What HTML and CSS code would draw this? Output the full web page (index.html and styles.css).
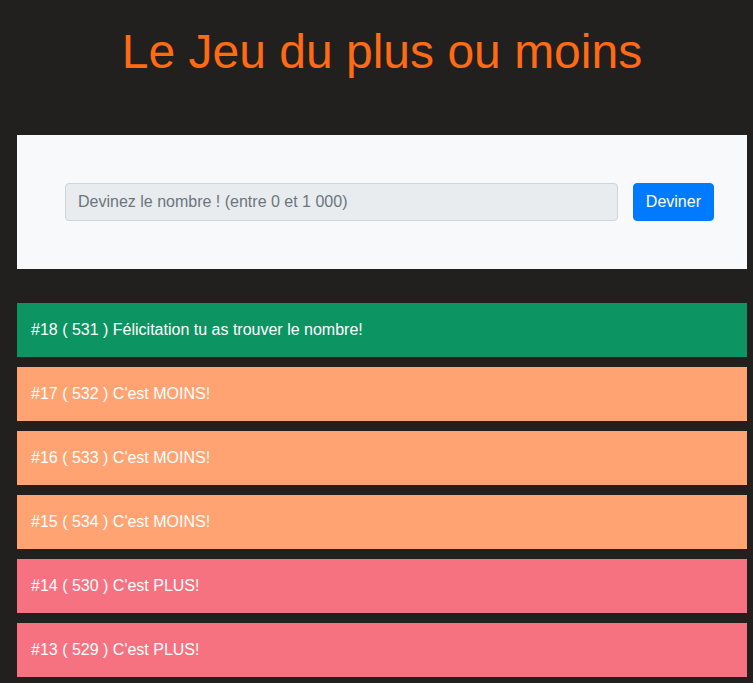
FILE: index.html
```html
<!DOCTYPE html>
<html lang="fr">
<head>
<meta charset="utf-8">
<title>Le Jeu du plus ou moins</title>
<link rel="stylesheet" href="styles.css">
</head>
<body>
<div class="page">
  <h1 class="title">Le Jeu du plus ou moins</h1>
  <form class="guess-box">
    <input class="guess-input" type="text" placeholder="Devinez le nombre ! (entre 0 et 1 000)">
    <button class="guess-btn" type="button">Deviner</button>
  </form>
  <ul class="history">
    <li class="entry win">#18 ( 531 ) Félicitation tu as trouver le nombre!</li>
    <li class="entry less">#17 ( 532 ) C'est MOINS!</li>
    <li class="entry less">#16 ( 533 ) C'est MOINS!</li>
    <li class="entry less">#15 ( 534 ) C'est MOINS!</li>
    <li class="entry more">#14 ( 530 ) C'est PLUS!</li>
    <li class="entry more">#13 ( 529 ) C'est PLUS!</li>
  </ul>
</div>
</body>
</html>
```
FILE: styles.css
```css
* { box-sizing: border-box; }
html, body { margin: 0; padding: 0; }
body {
  background: #22201f;
  font-family: "Liberation Sans", Arial, sans-serif;
  font-size: 16px;
  line-height: 1.5;
  overflow: hidden;
}
.page {
  padding: 0 6px 0 17px;
}
.title {
  margin: 0;
  padding-top: 25px;
  height: 135px;
  text-align: center;
  color: #ff6a13;
  font-weight: 400;
  font-size: 48px;
  line-height: 54px;
}
.guess-box {
  margin: 0;
  background: #f8f9fa;
  padding: 48px 33px 48px 48px;
  display: flex;
  gap: 15px;
  height: 134px;
}
.guess-input {
  flex: 1;
  height: 38px;
  padding: 6px 12px;
  font-family: inherit;
  font-size: 16px;
  line-height: 24px;
  background: #e9ecef;
  border: 1px solid #ced4da;
  border-radius: 4px;
  color: #495057;
  outline: none;
}
.guess-input::placeholder { color: #6c757d; opacity: 1; }
.guess-btn {
  height: 38px;
  padding: 6px 12px;
  font-family: inherit;
  font-size: 16px;
  line-height: 24px;
  color: #fff;
  background: #007bff;
  border: 1px solid #007bff;
  border-radius: 4px;
}
.history {
  list-style: none;
  margin: 34px 0 0;
  padding: 0;
  display: flex;
  flex-direction: column;
  gap: 10px;
}
.entry {
  color: #fff;
  padding: 15px 14px;
  line-height: 24px;
  height: 54px;
}
.win { background: #0d9463; }
.less { background: #ffa372; }
.more { background: #f67280; }
```
